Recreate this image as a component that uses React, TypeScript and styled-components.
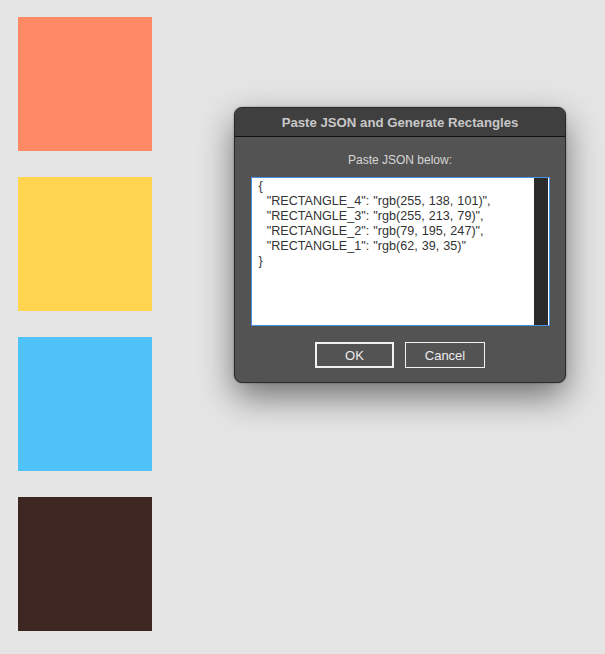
import { createGlobalStyle, styled } from 'styled-components';

const GlobalStyle = createGlobalStyle`
  html, body {
    margin: 0;
    padding: 0;
  }
  body {
    background-color: #e5e5e5;
    font-family: 'Liberation Sans', Arial, sans-serif;
  }
`;

const RECTANGLES = [
  { name: 'RECTANGLE_4', rgb: [255, 138, 101] },
  { name: 'RECTANGLE_3', rgb: [255, 213, 79] },
  { name: 'RECTANGLE_2', rgb: [79, 195, 247] },
  { name: 'RECTANGLE_1', rgb: [62, 39, 35] },
];

const toRgb = (rgb: number[]) => `rgb(${rgb.join(', ')})`;

const JSON_TEXT =
  '{\n' +
  RECTANGLES.map((r) => `  "${r.name}": "${toRgb(r.rgb)}"`).join(',\n') +
  '\n}';

const S = {
  Page: styled.div`
    position: relative;
    width: 605px;
    height: 654px;
    overflow: hidden;
  `,

  Canvas: styled.div`
    display: flex;
    flex-direction: column;
    gap: 26px;
    padding: 17px 0 0 18px;
  `,

  Rect: styled.div<{ $color: string }>`
    width: 134px;
    height: 134px;
    background-color: ${({ $color }) => $color};
  `,

  // modal dialog floating over the canvas
  Dialog: styled.div`
    position: absolute;
    left: 234px;
    top: 107px;
    width: 330px;
    height: 274px;
    display: flex;
    flex-direction: column;
    border: 1px solid #2a2a2a;
    border-radius: 8px;
    overflow: hidden;
    background-color: #535353;
    box-shadow: 0 14px 34px rgba(0, 0, 0, 0.5), 0 0 2px rgba(0, 0, 0, 0.4);
  `,

  TitleBar: styled.div`
    height: 28px;
    display: flex;
    align-items: center;
    justify-content: center;
    background-color: #3f3f3f;
    border-bottom: 1px solid #111;
    color: #c8c8c8;
    font-size: 13.2px;
    font-weight: 700;
  `,

  Body: styled.div`
    display: flex;
    flex-direction: column;
    align-items: center;
    padding: 16px 15px 0;
  `,

  Label: styled.div`
    color: #d6d6d6;
    font-size: 12px;
    line-height: 14px;
    margin-bottom: 10px;
  `,

  Field: styled.div`
    display: flex;
    width: 299px;
    height: 149px;
    box-sizing: border-box;
    border: 1px solid #4a90e2;
    background-color: #fff;
  `,

  TextArea: styled.textarea`
    flex: 1;
    border: none;
    outline: none;
    resize: none;
    padding: 1px 0 0 7px;
    margin: 0;
    overflow: hidden;
    font-family: 'Liberation Sans', Arial, sans-serif;
    font-size: 12.6px;
    line-height: 15px;
    word-spacing: 0.6px;
    color: #333;
    background: transparent;
    white-space: pre;
  `,

  ScrollTrack: styled.div`
    width: 14px;
    background-color: #2b2b2b;
    margin-right: 1px;
  `,

  Buttons: styled.div`
    display: flex;
    gap: 11px;
    margin-top: 16px;
  `,

  Button: styled.button<{ $primary?: boolean }>`
    width: ${({ $primary }) => ($primary ? '79px' : '80px')};
    height: 26px;
    box-sizing: border-box;
    background-color: #535353;
    border: ${({ $primary }) => ($primary ? '2px' : '1px')} solid #f2f2f2;
    border-radius: 0;
    color: #ececec;
    font-family: 'Liberation Sans', Arial, sans-serif;
    font-size: 13px;
    padding: 0;
  `,
};

export default function App() {
  return (
    <>
      <GlobalStyle />
      <S.Page>
        <S.Canvas>
          {RECTANGLES.map((r) => (
            <S.Rect key={r.name} $color={toRgb(r.rgb)} />
          ))}
        </S.Canvas>

        <S.Dialog>
          <S.TitleBar>Paste JSON and Generate Rectangles</S.TitleBar>
          <S.Body>
            <S.Label>Paste JSON below:</S.Label>
            <S.Field>
              <S.TextArea defaultValue={JSON_TEXT} spellCheck={false} />
              <S.ScrollTrack />
            </S.Field>
            <S.Buttons>
              <S.Button $primary>OK</S.Button>
              <S.Button>Cancel</S.Button>
            </S.Buttons>
          </S.Body>
        </S.Dialog>
      </S.Page>
    </>
  );
}
